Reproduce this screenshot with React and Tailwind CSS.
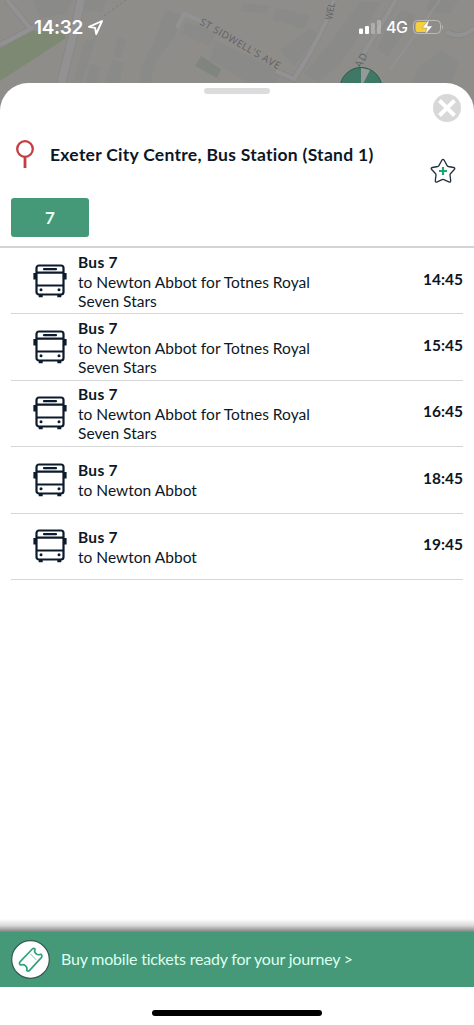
const departures = [
  { route: 'Bus 7', lines: ['to Newton Abbot for Totnes Royal', 'Seven Stars'], time: '14:45' },
  { route: 'Bus 7', lines: ['to Newton Abbot for Totnes Royal', 'Seven Stars'], time: '15:45' },
  { route: 'Bus 7', lines: ['to Newton Abbot for Totnes Royal', 'Seven Stars'], time: '16:45' },
  { route: 'Bus 7', lines: ['to Newton Abbot'], time: '18:45' },
  { route: 'Bus 7', lines: ['to Newton Abbot'], time: '19:45' },
]

function MapBackdrop() {
  return (
    <svg className="absolute inset-0" width="474" height="125" viewBox="0 0 474 125">
      <rect width="474" height="125" fill="#8e8d89" />
      <g fill="#8a8a89">
        <path d="M34 0h38l-6 14-26 4zM86 0h20l-4 12-18-2zM84 42l12-4-14 43h-8zM90 64l10 2-3 17h-11zM112 60l12 3-4 20h-15zM118 36l8 4-6 19-7-3z" />
        <path d="M165 10l17 5-8 22-9 12-10 14-4 20h-12l5-22 10-20zM186 22l30 10-6 14-28-12zM214 40l68 32-6 14h-22l-44-26z" />
        <path d="M244 3l26 3-4 8-26-3zM276 8l33 7-4 14-32-9zM332 40l28-38h22l-42 62-22 18-14-8z" />
        <path d="M384 34l18-24 14 6-28 40-11-7zM418 68l24-18 16 12-6 21h-40zM430 0h28l-8 14-24-3zM280 50l30-22 8 6-24 32z" />
      </g>
      <path d="M201 56l20 13-4 9-22-12z" fill="#80867e" />
      <path d="M0 48L32 31 64 33 66 38 0 81z" fill="#7d8973" />
      <g fill="none" stroke="#868686" strokeWidth="6">
        <path d="M0 45L34 27M7 0l23 28M334 0C328 20 312 52 294 79L276 71M396 0l-40 66" />
        <path d="M81 0L76 24 61 84" strokeWidth="9.500" />
        <path d="M474 28c-8 8-18 9-28 4" />
      </g>
      <g fill="none" stroke="#929293" strokeWidth="4.500">
        <path d="M0 45L34 27M7 0l23 28" />
        <path d="M81 0L76 24 61 84" strokeWidth="8" />
        <path d="M334 0C328 20 312 52 294 79L276 71M396 0l-40 66" />
        <path d="M474 28c-8 8-18 9-28 4M177 28l7-14 22 9" />
        <path d="M440 0l-50 70" strokeWidth="2" />
      </g>
      <path d="M104 16l22-16" stroke="#7d7d7b" strokeDasharray="3 2" />
      <g
        fill="#5f5f5f"
        fontFamily="'Open Sans', sans-serif"
        fontSize="10"
        fontWeight="500"
        stroke="#909090"
        strokeWidth="1"
        paintOrder="stroke"
      >
        <text transform="translate(199 24) rotate(30)" textLength="91">
          ST SIDWELL&apos;S AVE
        </text>
        <text transform="translate(332 20) rotate(-80)" fontSize="9.500" textLength="17" lengthAdjust="spacingAndGlyphs">
          WEL
        </text>
        <text transform="translate(360.500 68.500) rotate(-60)" textLength="15">
          AD
        </text>
      </g>
      <circle cx="361" cy="88.500" r="21" fill="#3f7864" stroke="#315a4d" />
      <path d="M361 68h1l8 2-7 14h-2z" fill="#969999" />
    </svg>
  )
}

function StatusBar() {
  return (
    <div className="relative flex h-[54px] items-center justify-between pl-[34px] pr-[30px] text-white">
      <div className="flex items-center gap-[5px]">
        <span className="font-[Inter] text-[19px] font-semibold leading-none tracking-[-0.35px]">14:32</span>
        <svg width="15" height="15" viewBox="0 0 15 15" fill="none" stroke="white" strokeWidth="1.9" strokeLinejoin="round">
          <path d="M14 1L1 6.900l6.100 1L8.200 14z" />
        </svg>
      </div>
      <div className="flex items-center">
        <svg width="22" height="14" viewBox="0 0 22 14" fill="white">
          <rect y="8.500" width="4" height="5.500" rx="1" />
          <rect x="6" y="6" width="4" height="8" rx="1" />
          <rect x="12" y="3" width="4" height="11" rx="1" opacity=".28" />
          <rect x="18" width="4" height="14" rx="1" opacity=".28" />
        </svg>
        <span className="ml-[5px] w-[22px] font-[Inter] text-[16px] font-medium leading-none tracking-[-0.4px]">4G</span>
        <svg className="ml-[5px]" width="31" height="16" viewBox="0 0 31 16">
          <rect x=".5" y="1.500" width="27" height="13" rx="4" fill="none" stroke="#bbbbb9" />
          <path d="M29 5.500q2 2.500 0 5z" fill="#bbbbb9" />
          <path d="M5 3h9v10H5q-2.500 0-2.500-2.500v-5Q2.500 3 5 3z" fill="#f6cf3d" />
          <path d="M16.500 0L9 9h5l-2 7 7.500-9H14.500z" fill="white" stroke="#8f8e89" strokeWidth=".5" />
        </svg>
      </div>
    </div>
  )
}

function BusIcon() {
  return (
    <svg width="34" height="34" viewBox="0 0 34 34" fill="none" stroke="#0c1b2c" strokeWidth="2.200">
      <rect x="3.500" y="1.500" width="27" height="29" rx="2.500" />
      <path d="M3.500 8.700h27M3.500 21.500h27" />
      <path d="M11 5.200h12" strokeLinecap="round" />
      <path d="M1.800 9v6.500M32.200 9v6.500" strokeWidth="2.800" />
      <path d="M7.700 30v3.300M26.300 30v3.300" strokeWidth="4" />
      <g fill="#0c1b2c" stroke="none">
        <circle cx="8" cy="25.800" r="1.500" />
        <circle cx="26" cy="25.800" r="1.500" />
      </g>
    </svg>
  )
}

function DepartureRow({ departure }) {
  return (
    <div className="mx-[11px] flex h-[66.4px] items-center border-b border-[#d5d6d8] pl-[22px] text-[#0c1726]">
      <BusIcon />
      <div className="ml-[11px] flex-1 whitespace-nowrap pt-[2px] text-[15.5px] leading-[19px]">
        <p className="mb-px font-bold tracking-[0.3px]">{departure.route}</p>
        {departure.lines.map((line) => (
          <p key={line} className="tracking-[0.02px]">{line}</p>
        ))}
      </div>
      <span className="-mt-[3px] text-[15.5px] font-bold">{departure.time}</span>
    </div>
  )
}

export default function App() {
  return (
    <div className="relative flex h-[1025px] w-[474px] flex-col overflow-hidden bg-white font-[Lato,sans-serif]">
      <div className="relative h-[83px] shrink-0">
        <MapBackdrop />
        <StatusBar />
      </div>

      <div className="relative flex flex-1 flex-col rounded-t-[28px] bg-white">
        <div className="flex h-[39px] items-start justify-end pr-[13px] pt-[11px]">
          <div className="absolute left-[204px] top-[5px] h-[6px] w-[66px] rounded-full bg-[#dcdcdc]" />
          <svg width="28" height="28" viewBox="0 0 28 28">
            <circle cx="14" cy="14" r="14" fill="#d8d8d8" />
            <path d="M6.500 6.500l15 15M21.500 6.500l-15 15" stroke="white" strokeWidth="4" />
          </svg>
        </div>

        <div className="flex h-[76px] items-start pl-[16px] pr-[18px] pt-[18px]">
          <svg width="18" height="28" viewBox="0 0 18 28" fill="none" stroke="#c43d45" strokeWidth="2.300">
            <circle cx="9" cy="9" r="7.800" />
            <path d="M9 17v11" strokeWidth="2.800" />
          </svg>
          <h1 className="ml-[16px] mt-[4px] flex-1 whitespace-nowrap text-[17.5px] font-bold leading-[22px] tracking-[0.28px] text-[#0c1726]">
            Exeter City Centre, Bus Station (Stand 1)
          </h1>
          <svg className="mt-[18px]" width="26" height="26" viewBox="0 0 26 26" fill="none">
            <path
              d="M11.800 2.300q1.200-2 2.400 0l2.900 5.300q.4.700 1.200.9l5.300 1q2 .5.700 2l-3.900 4.200q-.5.600-.4 1.400l.7 5.500q.1 2.200-1.900 1.300l-4.900-2.300q-.9-.4-1.800 0l-4.900 2.300q-2 .9-1.900-1.300l.7-5.500q.1-.8-.4-1.400L1.700 11.500q-1.300-1.500.7-2l5.300-1q.8-.2 1.200-.9z"
              stroke="#23303f"
              strokeWidth="1.300"
            />
            <path d="M13 9v8M9 13h8" stroke="#20a474" strokeWidth="2.200" />
          </svg>
        </div>

        <div className="h-[50px] border-b-2 border-[#d3d4d5] pl-[11px]">
          <button className="flex h-[39px] w-[78px] items-center justify-center rounded-[3px] bg-[#459978] text-[17px] font-bold text-[#e9fff5]">
            7
          </button>
        </div>

        <div>
          {departures.map((departure) => (
            <DepartureRow key={departure.time} departure={departure} />
          ))}
        </div>
      </div>

      <div className="relative flex h-[55px] shrink-0 items-center bg-[#459978] pl-[11px]">
        <div className="absolute inset-x-0 bottom-full h-[13px] bg-linear-to-t from-black/50 via-black/15 to-transparent" />
        <svg width="39" height="39" viewBox="0 0 39 39" fill="none">
          <circle cx="19.500" cy="19.500" r="18.800" fill="white" stroke="#315b50" strokeWidth="1.200" />
          <g stroke="#34a17c" strokeWidth="1.700" strokeLinejoin="round" strokeLinecap="round">
            <path d="M21.300 9Q22.500 7.700 24 9C22.500 12.500 26 16 29.800 14.200Q31.800 15.800 30.300 17.600L18.600 30.300Q17.200 31.800 15.700 30.300C17 26.800 13.500 23.500 9.600 25Q7.500 23.500 9.200 21.700z" />
            <path d="M19.500 14l5.500 5.500" strokeWidth="1" opacity=".65" />
          </g>
        </svg>
        <span className="-mt-px ml-[11px] whitespace-nowrap text-[16px] tracking-[-0.2px] text-[#dcfff0]">
          Buy mobile tickets ready for your journey &gt;
        </span>
      </div>
      <div className="flex h-[38px] shrink-0 items-start justify-center pt-[23px]">
        <div className="h-[6px] w-[170px] rounded-full bg-black" />
      </div>
    </div>
  )
}
